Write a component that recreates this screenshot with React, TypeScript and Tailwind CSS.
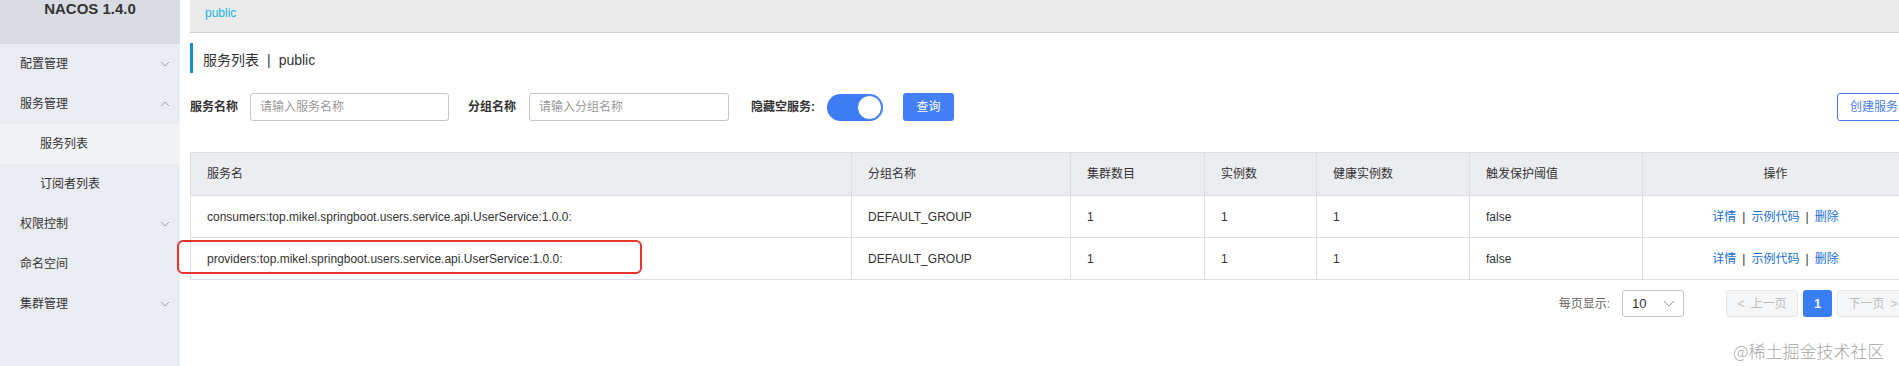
import React from 'react';

const menu = [
  { label: '配置管理', chevron: 'down' },
  { label: '服务管理', chevron: 'up' },
  { label: '服务列表', sub: true, active: true },
  { label: '订阅者列表', sub: true },
  { label: '权限控制', chevron: 'down' },
  { label: '命名空间' },
  { label: '集群管理', chevron: 'down' },
];

const rows = [
  'consumers:top.mikel.springboot.users.service.api.UserService:1.0.0:',
  'providers:top.mikel.springboot.users.service.api.UserService:1.0.0:',
];

function Chevron({ dir }: { dir: string }) {
  return (
    <svg width="10" height="6" viewBox="0 0 10 6" className="text-[#9a9ea6]">
      {dir === 'down' ? (
        <polyline points="1,1 5,5 9,1" fill="none" stroke="currentColor" strokeWidth="1" />
      ) : (
        <polyline points="1,5 5,1 9,5" fill="none" stroke="currentColor" strokeWidth="1" />
      )}
    </svg>
  );
}

export default function App() {
  return (
    <div className="relative flex w-[1899px] h-[366px] overflow-hidden bg-white font-['Liberation_Sans','Noto_Sans_CJK_SC',sans-serif] text-[#333]">
      {/* Sidebar */}
      <aside className="w-[180px] shrink-0 h-full bg-[#e9ecf0]">
        <div className="h-[44px] bg-[#d9dde3] flex justify-center">
          <div className="text-[15px] leading-[18px] font-bold text-[#333]">NACOS 1.4.0</div>
        </div>
        <nav>
          {menu.map((m) => (
            <div
              key={m.label}
              className={`h-[40px] flex items-center justify-between pr-[10px] text-[12px] text-[#333] ${
                m.sub ? 'pl-[40px]' : 'pl-[20px]'
              } ${m.active ? 'bg-[#f1f3f5]' : ''}`}
            >
              <span>{m.label}</span>
              {m.chevron && <Chevron dir={m.chevron} />}
            </div>
          ))}
        </nav>
      </aside>

      {/* Main */}
      <main className="flex-1 pl-[10px]">
        <div className="h-[33px] bg-[#ebebeb] border-b border-[#cfcfcf] pl-[15px] pt-[4px] text-[12px] leading-[18px] text-[#19b3e2]">
          public
        </div>

        <div className="w-[1719px]">
          {/* Title */}
          <div className="mt-[10px] h-[30px] border-l-[3px] border-[#1a8fcd] pl-[10px] pt-[5px] flex items-center text-[14px] text-[#333]">
            <span>服务列表</span>
            <span className="mx-[8px]">|</span>
            <span>public</span>
          </div>

          {/* Search row */}
          <div className="mt-[20px] h-[28px] flex items-center justify-between">
            <div className="flex items-center text-[12px]">
              <span className="font-bold text-[#333] mr-[12px]">服务名称</span>
              <div className="w-[199px] h-[28px] border border-[#c4c6cf] rounded-[3px] flex items-center pl-[9px] text-[#999] mr-[19px]">
                请输入服务名称
              </div>
              <span className="font-bold text-[#333] mr-[13px]">分组名称</span>
              <div className="w-[200px] h-[28px] border border-[#c4c6cf] rounded-[3px] flex items-center pl-[9px] text-[#999] mr-[22px]">
                请输入分组名称
              </div>
              <span className="font-bold text-[#333] mr-[12px]">隐藏空服务:</span>
              <div className="relative w-[56px] h-[27px] rounded-full bg-[#3e7cf4] mr-[20px]">
                <div className="absolute right-[1px] top-[1px] w-[25px] h-[25px] rounded-full bg-white border border-[#3e7cf4]" />
              </div>
              <div className="w-[51px] h-[28px] rounded-[3px] bg-[#4380f5] text-white flex items-center justify-center">
                查询
              </div>
            </div>
            <div className="w-[72px] h-[28px] border border-[#4a7fe8] rounded-[3px] text-[#4a7fe8] text-[12px] flex items-center pl-[12px]">
              创建服务
            </div>
          </div>

          {/* Table */}
          <div className="relative mt-[31px]">
            <table className="table-fixed border-collapse text-[12px] text-[#333]">
              <thead>
                <tr className="h-[43px] bg-[#ebedf1]">
                  <th className="w-[661px] border border-[#dcdee3] px-[16px] text-left font-normal">服务名</th>
                  <th className="w-[219px] border border-[#dcdee3] px-[16px] text-left font-normal">分组名称</th>
                  <th className="w-[134px] border border-[#dcdee3] px-[16px] text-left font-normal">集群数目</th>
                  <th className="w-[112px] border border-[#dcdee3] px-[16px] text-left font-normal">实例数</th>
                  <th className="w-[153px] border border-[#dcdee3] px-[16px] text-left font-normal">健康实例数</th>
                  <th className="w-[173px] border border-[#dcdee3] px-[16px] text-left font-normal">触发保护阈值</th>
                  <th className="w-[266px] border border-[#dcdee3] px-[16px] text-center font-normal">操作</th>
                </tr>
              </thead>
              <tbody>
                {rows.map((r) => (
                  <tr key={r} className="h-[42px]">
                    <td className="border border-[#dcdee3] px-[16px]">{r}</td>
                    <td className="border border-[#dcdee3] px-[16px]">DEFAULT_GROUP</td>
                    <td className="border border-[#dcdee3] px-[16px]">1</td>
                    <td className="border border-[#dcdee3] px-[16px]">1</td>
                    <td className="border border-[#dcdee3] px-[16px]">1</td>
                    <td className="border border-[#dcdee3] px-[16px]">false</td>
                    <td className="border border-[#dcdee3] px-[16px] text-center">
                      <span className="text-[#1b6fd1]">详情</span>
                      <span className="mx-[6px]">|</span>
                      <span className="text-[#1b6fd1]">示例代码</span>
                      <span className="mx-[6px]">|</span>
                      <span className="text-[#1b6fd1]">删除</span>
                    </td>
                  </tr>
                ))}
              </tbody>
            </table>
            {/* highlight annotation */}
            <div className="absolute left-[-13px] top-[88px] w-[465px] h-[34px] border-2 border-[#e8332f] rounded-[6px]" />
          </div>

          {/* Pagination */}
          <div className="mt-[10px] flex items-center justify-end text-[12px]">
            <span className="text-[#666] mr-[12px]">每页显示:</span>
            <div className="w-[62px] h-[27px] border border-[#c4c6cf] rounded-[3px] flex items-center justify-between pl-[9px] pr-[8px] mr-[42px]">
              <span className="text-[#333] text-[13px]">10</span>
              <svg width="12" height="7" viewBox="0 0 12 7">
                <polyline points="1,1 6,6 11,1" fill="none" stroke="#999" strokeWidth="1" />
              </svg>
            </div>
            <div className="w-[72px] h-[27px] bg-[#f5f6f8] border border-[#e4e6ea] rounded-[3px] flex items-center justify-center text-[#bbb] mr-[5px]">
              <span className="mr-[6px]">&lt;</span>上一页
            </div>
            <div className="w-[29px] h-[27px] bg-[#3a7ef5] rounded-[3px] flex items-center justify-center text-white font-bold mr-[5px]">
              1
            </div>
            <div className="w-[72px] h-[27px] bg-[#f5f6f8] border border-[#e4e6ea] rounded-[3px] flex items-center justify-center text-[#bbb]">
              下一页<span className="ml-[6px]">&gt;</span>
            </div>
          </div>
        </div>
      </main>

      {/* watermark */}
      <div className="absolute left-[1733px] top-[340px] text-[17px] leading-[22px] text-[#a6a6a6] font-['Noto_Sans_CJK_SC',sans-serif] font-light">
        @稀土掘金技术社区
      </div>
    </div>
  );
}
